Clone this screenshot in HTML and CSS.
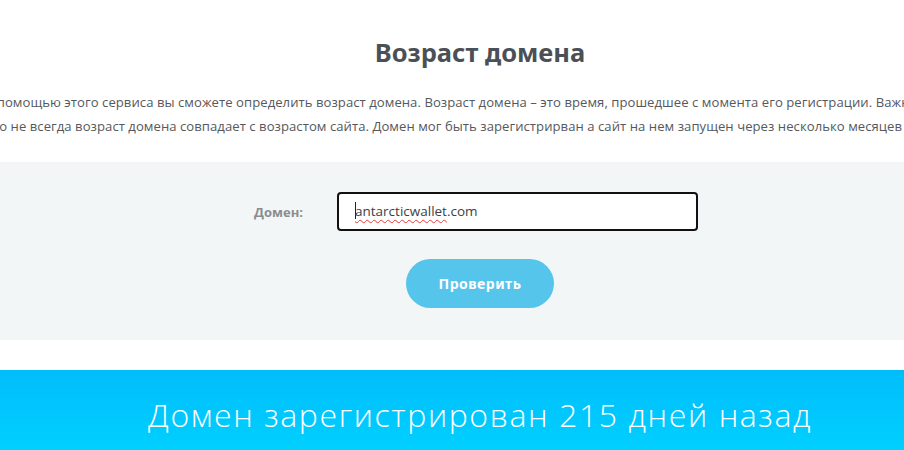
FILE: index.html
```html
<!DOCTYPE html>
<html lang="ru">
<head>
<meta charset="utf-8">
<link rel="stylesheet" href="styles.css">
</head>
<body>
<div class="wrap">
  <h1 class="title">Возраст домена</h1>
  <p class="lead">С помощью этого сервиса вы сможете определить возраст домена. Возраст домена – это время, прошедшее с момента его регистрации. Важно понимать,<br>что не всегда возраст домена совпадает с возрастом сайта. Домен мог быть зарегистрирван а сайт на нем запущен через несколько месяцев или лет.</p>
  <form class="panel">
    <div class="row">
      <label class="label" for="d">Домен:</label>
      <div class="input"><span class="caret"></span><span class="spell">antarcticwallet</span>.com</div>
    </div>
    <div class="actions">
      <button type="button" class="btn">Проверить</button>
    </div>
  </form>
  <div class="result">Домен зарегистрирован 215 дней назад</div>
</div>
</body>
</html>
```
FILE: styles.css
```css
html, body {
  margin: 0;
  padding: 0;
  background: #fff;
  overflow: hidden;
}
body {
  font-family: "Open Sans", "Noto Sans", sans-serif;
  width: 904px;
  height: 450px;
}
.wrap {
  width: 990px;
  margin-left: -15px;
}
.title {
  margin: 0;
  padding-top: 36px;
  height: 32px;
  line-height: 32px;
  font-size: 25.5px;
  font-weight: 700;
  color: #4b5056;
  text-align: center;
  font-family: "Noto Sans", sans-serif;
}
.lead {
  margin: 22px 0 0;
  font-size: 13.1px;
  letter-spacing: 0.05px;
  line-height: 24px;
  color: #55585c;
  white-space: nowrap;
}
.panel {
  margin-top: 24px;
  background: #f3f6f7;
  padding: 30px 0 32px;
}
.row {
  display: flex;
  align-items: center;
  gap: 34px;
}
.label {
  width: 85px;
  margin-left: 233px;
  text-align: right;
  font-size: 13px;
  font-weight: 700;
  color: #8b8d8f;
}
.input {
  box-sizing: border-box;
  width: 361px;
  height: 39px;
  border: 2px solid #111;
  border-radius: 4px;
  background: #fff;
  padding-left: 16px;
  padding-bottom: 2px;
  display: flex;
  align-items: center;
  font-size: 13.5px;
  color: #3c3f44;
}
.caret {
  display: inline-block;
  width: 1px;
  height: 17px;
  background: #222;
  margin-right: -1px;
}
.spell {
  text-decoration: underline wavy #e53935;
  text-decoration-thickness: 1px;
  text-underline-offset: 3px;
}
.actions {
  display: flex;
  justify-content: center;
  margin-top: 28px;
}
.btn {
  width: 148px;
  height: 49px;
  border: none;
  border-radius: 25px;
  background: #56c5ec;
  color: #fff;
  font-family: "Noto Sans", sans-serif;
  font-weight: 700;
  font-size: 14px;
  letter-spacing: 0.5px;
}
.result {
  margin-top: 30px;
  height: 90px;
  padding-top: 25px;
  box-sizing: border-box;
  background: linear-gradient(#00bdfc, #00d2ff);
  color: #fff;
  text-align: center;
  font-size: 32px;
  font-weight: 300;
  letter-spacing: 1.6px;
  line-height: 40px;
  font-family: "Open Sans", sans-serif;
}
```
